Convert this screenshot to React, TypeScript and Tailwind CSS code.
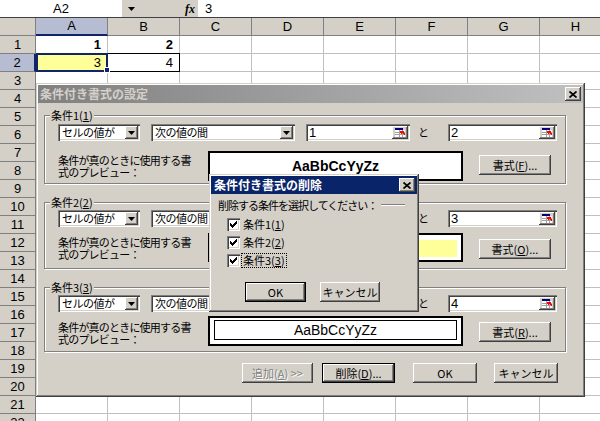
import React from "react"

const raised =
  "shadow-[inset_-1px_-1px_#404040,inset_1px_1px_#ffffff,inset_-2px_-2px_#808080,inset_2px_2px_#d4d0c8]"
const sunken =
  "shadow-[inset_1px_1px_#808080,inset_2px_2px_#404040,inset_-1px_-1px_#ffffff,inset_-2px_-2px_#d4d0c8]"
const frame =
  "shadow-[inset_-1px_-1px_#404040,inset_1px_1px_#d4d0c8,inset_-2px_-2px_#808080,inset_2px_2px_#ffffff]"
const jp = "font-['Noto_Sans_CJK_JP',sans-serif]"

const cols = ["A", "B", "C", "D", "E", "F", "G", "H"]

function Arrow() {
  return (
    <svg width="7" height="4" viewBox="0 0 7 4">
      <path d="M0 0h7L3.5 4z" fill="#000" />
    </svg>
  )
}

function CloseIcon() {
  return (
    <svg width="8" height="7" viewBox="0 0 8 7">
      <path d="M0.5 0.5L7.5 6.5M7.5 0.5L0.5 6.5" stroke="#000" strokeWidth="1.7" />
    </svg>
  )
}

function RefIcon() {
  return (
    <svg width="11" height="9" viewBox="0 0 11 9" shapeRendering="crispEdges">
      <rect x="0" y="2" width="10" height="7" fill="#fff" />
      <path d="M0 4.5h10M0 6.5h10M4.5 2v7M7.5 2v7" stroke="#a0a0a0" strokeWidth="1" />
      <rect x="0" y="0" width="8" height="2" fill="#000080" />
      <polygon points="5,3 9,3 8,4 10,6 9,7 7,5 6,6" fill="#ff0000" />
    </svg>
  )
}

function Btn({
  children,
  className = "",
  def = false,
  disabled = false,
}: {
  children: React.ReactNode
  className?: string
  def?: boolean
  disabled?: boolean
}) {
  return (
    <div className={`${className} flex shrink-0 ${def ? "border border-black" : ""}`}>
      <div
        className={`flex-1 flex items-center justify-center bg-[#d4d0c8] ${raised} text-[11px] leading-[12px] whitespace-nowrap ${
          disabled ? "text-[#808080] [text-shadow:1px_1px_0_#ffffff]" : "text-black"
        }`}
      >
        {children}
      </div>
    </div>
  )
}

function Combo({ className, text }: { className: string; text: string }) {
  return (
    <div className={`${className} h-[17px] shrink-0 bg-white ${sunken} flex items-center p-[2px]`}>
      <span className="flex-1 pl-[2px] text-[11px] leading-[13px] tracking-[-0.5px] whitespace-nowrap">{text}</span>
      <div className={`w-[13px] h-[13px] bg-[#d4d0c8] ${raised} flex items-center justify-center`}>
        <Arrow />
      </div>
    </div>
  )
}

function RefInput({ className, value }: { className: string; value: string }) {
  return (
    <div className={`${className} h-[17px] shrink-0 bg-white ${sunken} flex items-center p-[2px]`}>
      <span className="flex-1 pl-[1px] text-[13px] leading-[13px] font-['Liberation_Sans',sans-serif]">{value}</span>
      <div className={`w-[16px] h-[13px] bg-[#d4d0c8] ${raised} flex items-center justify-center`}>
        <RefIcon />
      </div>
    </div>
  )
}

function Group({ n, className, children }: { n: number; className: string; children: React.ReactNode }) {
  return (
    <div className={`relative border border-[#808080] shadow-[inset_1px_1px_#ffffff,1px_1px_#ffffff] ${className}`}>
      <span className="absolute -top-[8px] left-[5px] bg-[#d4d0c8] px-[1px] text-[11px] leading-[14px]">
        条件{n}(<u>{n}</u>)
      </span>
      {children}
    </div>
  )
}

function ConditionRow({ a, b }: { a: string; b: string }) {
  return (
    <div className="flex items-center h-[17px]">
      <Combo className="w-[82px]" text="セルの値が" />
      <Combo className="w-[144px] ml-[11px]" text="次の値の間" />
      <RefInput className="w-[104px] ml-[11px]" value={a} />
      <span className="w-[38px] shrink-0 pl-[8px] text-[11px] leading-[13px]">と</span>
      <RefInput className="w-[109px]" value={b} />
    </div>
  )
}

function Label() {
  return (
    <div className="w-[150px] shrink-0 text-[11px] leading-[12px] tracking-[-0.8px] whitespace-nowrap">
      条件が真のときに使用する書
      <br />
      式のプレビュー：
    </div>
  )
}

function CheckBox() {
  return (
    <div className={`w-[13px] h-[13px] shrink-0 bg-white ${sunken} flex items-center justify-center`}>
      <svg width="7" height="7" viewBox="0 0 7 7" shapeRendering="crispEdges">
        <path d="M0 2h1v1h1v1h1v-1h1v-1h1v-1h1v-1h1v3h-1v1h-1v1h-1v1h-1v1h-1v-1h-1v-1h-1z" fill="#000" />
      </svg>
    </div>
  )
}

function Cell({ r, c }: { r: number; c: string }) {
  const base = "w-[72px] h-[18px] shrink-0 border-r border-b border-[#c0c0c0] flex items-center justify-end pr-[6px] text-[13px]"
  if (r === 1 && c === "A") return <div className={`${base} font-bold`}>1</div>
  if (r === 1 && c === "B") return <div className={`${base} font-bold`}>2</div>
  if (r === 2 && c === "A")
    return (
      <div className={`${base} relative bg-[#ffff99]`}>
        3
        <div className="absolute -top-[1px] left-0 w-[72px] h-[19px] border-2 border-[#10246a] z-10" />
        <div className="absolute left-[68px] top-[13px] w-[6px] h-[6px] bg-[#10246a] border border-white z-10" />
      </div>
    )
  if (r === 2 && c === "B")
    return (
      <div className={`${base} relative`}>
        4
        <div className="absolute -left-[1px] -top-[1px] w-[73px] h-[19px] border border-black" />
      </div>
    )
  return <div className={base} />
}

export default function App() {
  const rows = Array.from({ length: 22 }, (_, i) => i + 1)

  return (
    <div className="relative w-[600px] h-[421px] overflow-hidden bg-white text-black font-['Liberation_Sans','Noto_Sans_CJK_JP',sans-serif]">
      {/* Formula bar */}
      <div className="flex h-[18px] bg-[#d4d0c8] border-b border-[#404040]">
        <div className="w-[122px] h-[17px] bg-white flex items-center justify-center text-[13px]">A2</div>
        <div className="w-[76px] shrink-0 flex items-center">
          <span className="ml-[6px] flex">
            <Arrow />
          </span>
          <span className="ml-[50px] italic font-bold text-[12px] leading-[12px] font-['Liberation_Serif',serif]">fx</span>
        </div>
        <div className="flex-1 h-[17px] bg-white flex items-center pl-[7px] text-[13px]">3</div>
      </div>

      {/* Column headers */}
      <div className="flex h-[18px]">
        <div className="w-[36px] shrink-0 bg-[#d4d0c8] border-r border-b border-[#808080]" />
        {cols.map((c) => (
          <div
            key={c}
            className={`w-[72px] shrink-0 flex items-center justify-center text-[13px] border-r border-b ${
              c === "A" ? "bg-[#b6bdd2] border-r-[#808080] border-b-2 border-b-[#10246a]" : "bg-[#d4d0c8] border-[#808080]"
            }`}
          >
            {c}
          </div>
        ))}
      </div>

      {/* Rows */}
      {rows.map((r) => (
        <div key={r} className="flex h-[18px]">
          <div
            className={`w-[36px] shrink-0 flex items-center justify-center text-[13px] border-r border-b ${
              r === 2 ? "bg-[#b6bdd2] border-b-[#808080] border-r-2 border-r-[#10246a]" : "bg-[#d4d0c8] border-[#808080]"
            }`}
          >
            {r}
          </div>
          {cols.map((c) => (
            <Cell key={c} r={r} c={c} />
          ))}
        </div>
      ))}

      {/* Conditional formatting dialog */}
      <div className={`absolute left-[36px] top-[83px] w-[549px] h-[314px] bg-[#d4d0c8] p-[2px] ${frame} ${jp}`}>
        <div className="h-[18px] bg-gradient-to-r from-[#808080] to-[#c0c0c0] flex items-center pl-[2px] pr-[2px]">
          <span className="text-[12px] leading-[14px] font-bold text-[#d4d0c8]">条件付き書式の設定</span>
          <div className={`ml-auto w-[16px] h-[14px] bg-[#d4d0c8] ${raised} flex items-center justify-center`}>
            <CloseIcon />
          </div>
        </div>

        <div className="ml-[6px] mt-[12px] w-[522px] flex flex-col">
          <Group n={1} className="h-[69px] pt-[8px] pl-[13px]">
            <ConditionRow a="1" b="2" />
            <div className="flex items-start mt-[10px]">
              <div className="pt-[3px]">
                <Label />
              </div>
              <div className="w-[255px] h-[30px] shrink-0 bg-white border-2 border-black flex items-center justify-center font-bold text-[14px] font-['Liberation_Sans',sans-serif]">
                AaBbCcYyZz
              </div>
              <Btn className="ml-[16px] mt-[4px] w-[72px] h-[20px]">
                書式(<u>F</u>)...
              </Btn>
            </div>
          </Group>

          <Group n={2} className="mt-[18px] h-[67px] pt-[7px] pl-[13px]">
            <ConditionRow a="1" b="3" />
            <div className="flex items-start mt-[6px]">
              <div className="pt-[3px]">
                <Label />
              </div>
              <div className="w-[255px] h-[29px] shrink-0 bg-white border-2 border-black px-[4px] pt-[5px] pb-[3px]">
                <div className="h-full bg-[#ffff99] flex items-center justify-center text-[14px] font-['Liberation_Sans',sans-serif]">
                  AaBbCcYyZz
                </div>
              </div>
              <Btn className="ml-[16px] mt-[6px] w-[72px] h-[20px]">
                書式(<u>O</u>)...
              </Btn>
            </div>
          </Group>

          <Group n={3} className="mt-[18px] h-[65px] pt-[7px] pl-[13px]">
            <ConditionRow a="2" b="4" />
            <div className="flex items-start mt-[4px]">
              <div className="pt-[5px]">
                <Label />
              </div>
              <div className="w-[255px] h-[30px] shrink-0 bg-white border-2 border-black px-[4px] pt-[2px] pb-[4px]">
                <div className="h-full border border-black flex items-center justify-center text-[14px] font-['Liberation_Sans',sans-serif]">
                  AaBbCcYyZz
                </div>
              </div>
              <Btn className="ml-[16px] mt-[6px] w-[72px] h-[20px]">
                書式(<u>R</u>)...
              </Btn>
            </div>
          </Group>
        </div>

        <div className="flex mt-[11px] ml-[204px]">
          <Btn className="w-[71px] h-[20px]" disabled>
            追加(<u>A</u>) &gt;&gt;
          </Btn>
          <Btn className="ml-[9px] w-[73px] h-[20px]" def>
            削除(<u>D</u>)...
          </Btn>
          <Btn className="ml-[18px] w-[64px] h-[20px]">OK</Btn>
          <Btn className="ml-[17px] w-[64px] h-[20px]">キャンセル</Btn>
        </div>
      </div>

      {/* Delete conditions dialog */}
      <div className={`absolute left-[209px] top-[174px] w-[210px] h-[138px] bg-[#d4d0c8] p-[2px] ${frame} ${jp}`}>
        <div className="h-[18px] bg-[#0a246a] flex items-center pl-[3px] pr-[2px]">
          <span className="text-[12px] leading-[14px] font-bold text-white">条件付き書式の削除</span>
          <div className={`ml-auto w-[16px] h-[14px] bg-[#d4d0c8] ${raised} flex items-center justify-center`}>
            <CloseIcon />
          </div>
        </div>

        <div className="flex items-center mt-[5px] pl-[7px] pr-[12px]">
          <span className="text-[11px] leading-[12px] tracking-[-1px] whitespace-nowrap">削除する条件を選択してください：</span>
          <div className="flex-1 ml-[4px] border-t border-t-[#808080] border-b border-b-white" />
        </div>

        <div className="mt-[4px] pl-[16px] flex flex-col">
          {[1, 2, 3].map((n) => (
            <div key={n} className="h-[18px] flex items-center">
              <CheckBox />
              <span
                className={`ml-[1px] px-[1px] text-[11px] leading-[13px] border ${
                  n === 3 ? "border-dotted border-black" : "border-transparent"
                }`}
              >
                条件{n}(<u>{n}</u>)
              </span>
            </div>
          ))}
        </div>

        <div className="flex mt-[13px] pl-[34px]">
          <Btn className="w-[61px] h-[20px]" def>
            OK
          </Btn>
          <Btn className="ml-[14px] w-[60px] h-[20px]">キャンセル</Btn>
        </div>
      </div>
    </div>
  )
}
